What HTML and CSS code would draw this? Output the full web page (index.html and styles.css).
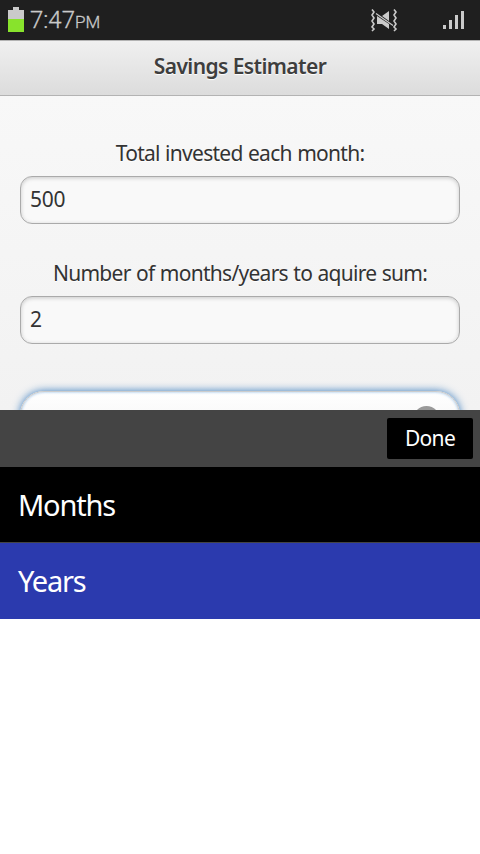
FILE: index.html
```html
<!DOCTYPE html>
<html lang="en">
<head>
  <meta charset="UTF-8">
  <meta name="viewport" content="width=device-width, initial-scale=1">
  <title>Savings Estimater</title>
  <link rel="stylesheet" href="styles.css">
</head>
<body>
  <div class="statusbar">
    <svg class="battery" width="16" height="25" viewBox="0 0 16 25" shape-rendering="crispEdges">
      <path d="M5 0h6v3h5v9H0V3h5z" fill="#cacaca"/>
      <path d="M0 12h16v13H0z" fill="#88e32c"/>
    </svg>
    <div class="clock">7:47<span class="ampm">PM</span></div>
    <svg class="mute" width="28" height="24" viewBox="0 0 28 24">
      <path d="M2 1.500l2 2.500-2 3 2 3-2 3 2 3-2 3 2 2-2 2M24 1.500l2 2.500-2 3 2 3-2 3 2 3-2 3 2 2-2 2" fill="none" stroke="#cacaca" stroke-width="1.600"/>
      <path d="M7 8v8h5l7 5v-5L7 8zM12 8l7-5v10z" fill="#cacaca"/>
      <path d="M6 5.500l17 12" fill="none" stroke="#cacaca" stroke-width="1.200"/>
    </svg>
    <svg class="signal" width="21" height="18" viewBox="0 0 21 18" shape-rendering="crispEdges">
      <path d="M0 14h3v4H0zM6 9h3v9H6zM12 4h3v14h-3zM18 0h3v18h-3z" fill="#cacaca"/>
    </svg>
  </div>

  <div class="page">
    <header class="header">
      <h1>Savings Estimater</h1>
    </header>

    <form class="content">
      <label for="invested">Total invested each month:</label>
      <input type="text" id="invested" value="500">

      <label for="period">Number of months/years to aquire sum:</label>
      <input type="text" id="period" value="2">

      <div class="select focus">
        <span class="select-icon"></span>
      </div>
    </form>
  </div>

  <div class="picker">
    <div class="toolbar">
      <button class="done" type="button">Done</button>
    </div>
    <ul class="options">
      <li>Months</li>
      <li class="selected">Years</li>
    </ul>
  </div>
</body>
</html>
```
FILE: styles.css
```css
* {
  box-sizing: border-box;
}

body {
  margin: 0;
  height: 854px;
  overflow: hidden;
  font-family: "Noto Sans", sans-serif;
  background-color: #fff;
  color: #333;
}

/* status bar */
.statusbar {
  display: flex;
  align-items: flex-start;
  height: 40px;
  padding: 7px 16px 0 8px;
  background-color: #1f1f1f;
}

.clock {
  margin-left: 6px;
  font-family: Roboto, sans-serif;
  font-size: 24px;
  font-weight: 300;
  line-height: 26px;
  color: #cacaca;
  -webkit-text-stroke: 0.3px #cacaca;
}

.ampm {
  font-size: 17px;
}

.mute {
  margin: 1px 45px 0 auto;
}

.signal {
  margin-top: 4px;
}

/* page */
.page {
  height: 370px;
  overflow: hidden;
  background-image: linear-gradient(#f9f9f9, #f2f2f2);
}

.header {
  height: 56px;
  border: 1px solid #b3b3b3;
  border-width: 1px 0;
  background-image: linear-gradient(#f0f0f0, #dcdcdc);
}

.header h1 {
  margin: 0;
  font-size: 21px;
  font-weight: 600;
  letter-spacing: -0.6px;
  line-height: 50px;
  text-align: center;
  color: #3e3e3e;
  text-shadow: 0 1px 1px #fff;
}

.content {
  padding: 40px 20px 0;
}

.content label {
  display: block;
  height: 40px;
  font-size: 21px;
  letter-spacing: -0.72px;
  word-spacing: 0.6px;
  line-height: 34px;
  text-align: center;
  white-space: nowrap;
  text-shadow: 0 1px 0 #fff;
}

.content input {
  display: block;
  width: 100%;
  height: 48px;
  margin-bottom: 32px;
  padding: 0 9px 2px;
  border: 1px solid #aaa;
  border-radius: 12px;
  background-color: #f9f9f9;
  box-shadow: inset 0 1px 4px rgba(0, 0, 0, 0.2);
  font-family: inherit;
  font-size: 21px;
  letter-spacing: -0.3px;
  color: #333;
}

.select {
  display: flex;
  justify-content: flex-end;
  height: 56px;
  margin-top: 47px;
  padding: 14px 19px;
  border: 1px solid #ccc;
  border-radius: 24px;
  background-image: linear-gradient(#fff, #f1f1f1);
}

.select.focus {
  box-shadow: inset 0 0 3px #8fbbe6, 0 0 9px #387bbe;
}

.select-icon {
  width: 27px;
  height: 27px;
  border-radius: 50%;
  background-color: #999;
}

/* picker */
.toolbar {
  display: flex;
  justify-content: flex-end;
  height: 57px;
  padding: 8px 7px;
  background-color: #444;
}

.done {
  width: 86px;
  height: 41px;
  padding: 0 0 1px;
  border: none;
  border-radius: 2px;
  background-color: #000;
  font-family: inherit;
  font-size: 21px;
  letter-spacing: -0.7px;
  color: #fff;
}

.options {
  margin: 0;
  padding: 0;
  list-style: none;
}

.options li {
  height: 76px;
  padding-left: 18px;
  border-bottom: 1px solid #444;
  font-size: 29px;
  letter-spacing: -1.2px;
  line-height: 76px;
  color: #fff;
  background-color: #000;
}

.options .selected {
  border-bottom: none;
  background-color: #2b3aae;
}
```
